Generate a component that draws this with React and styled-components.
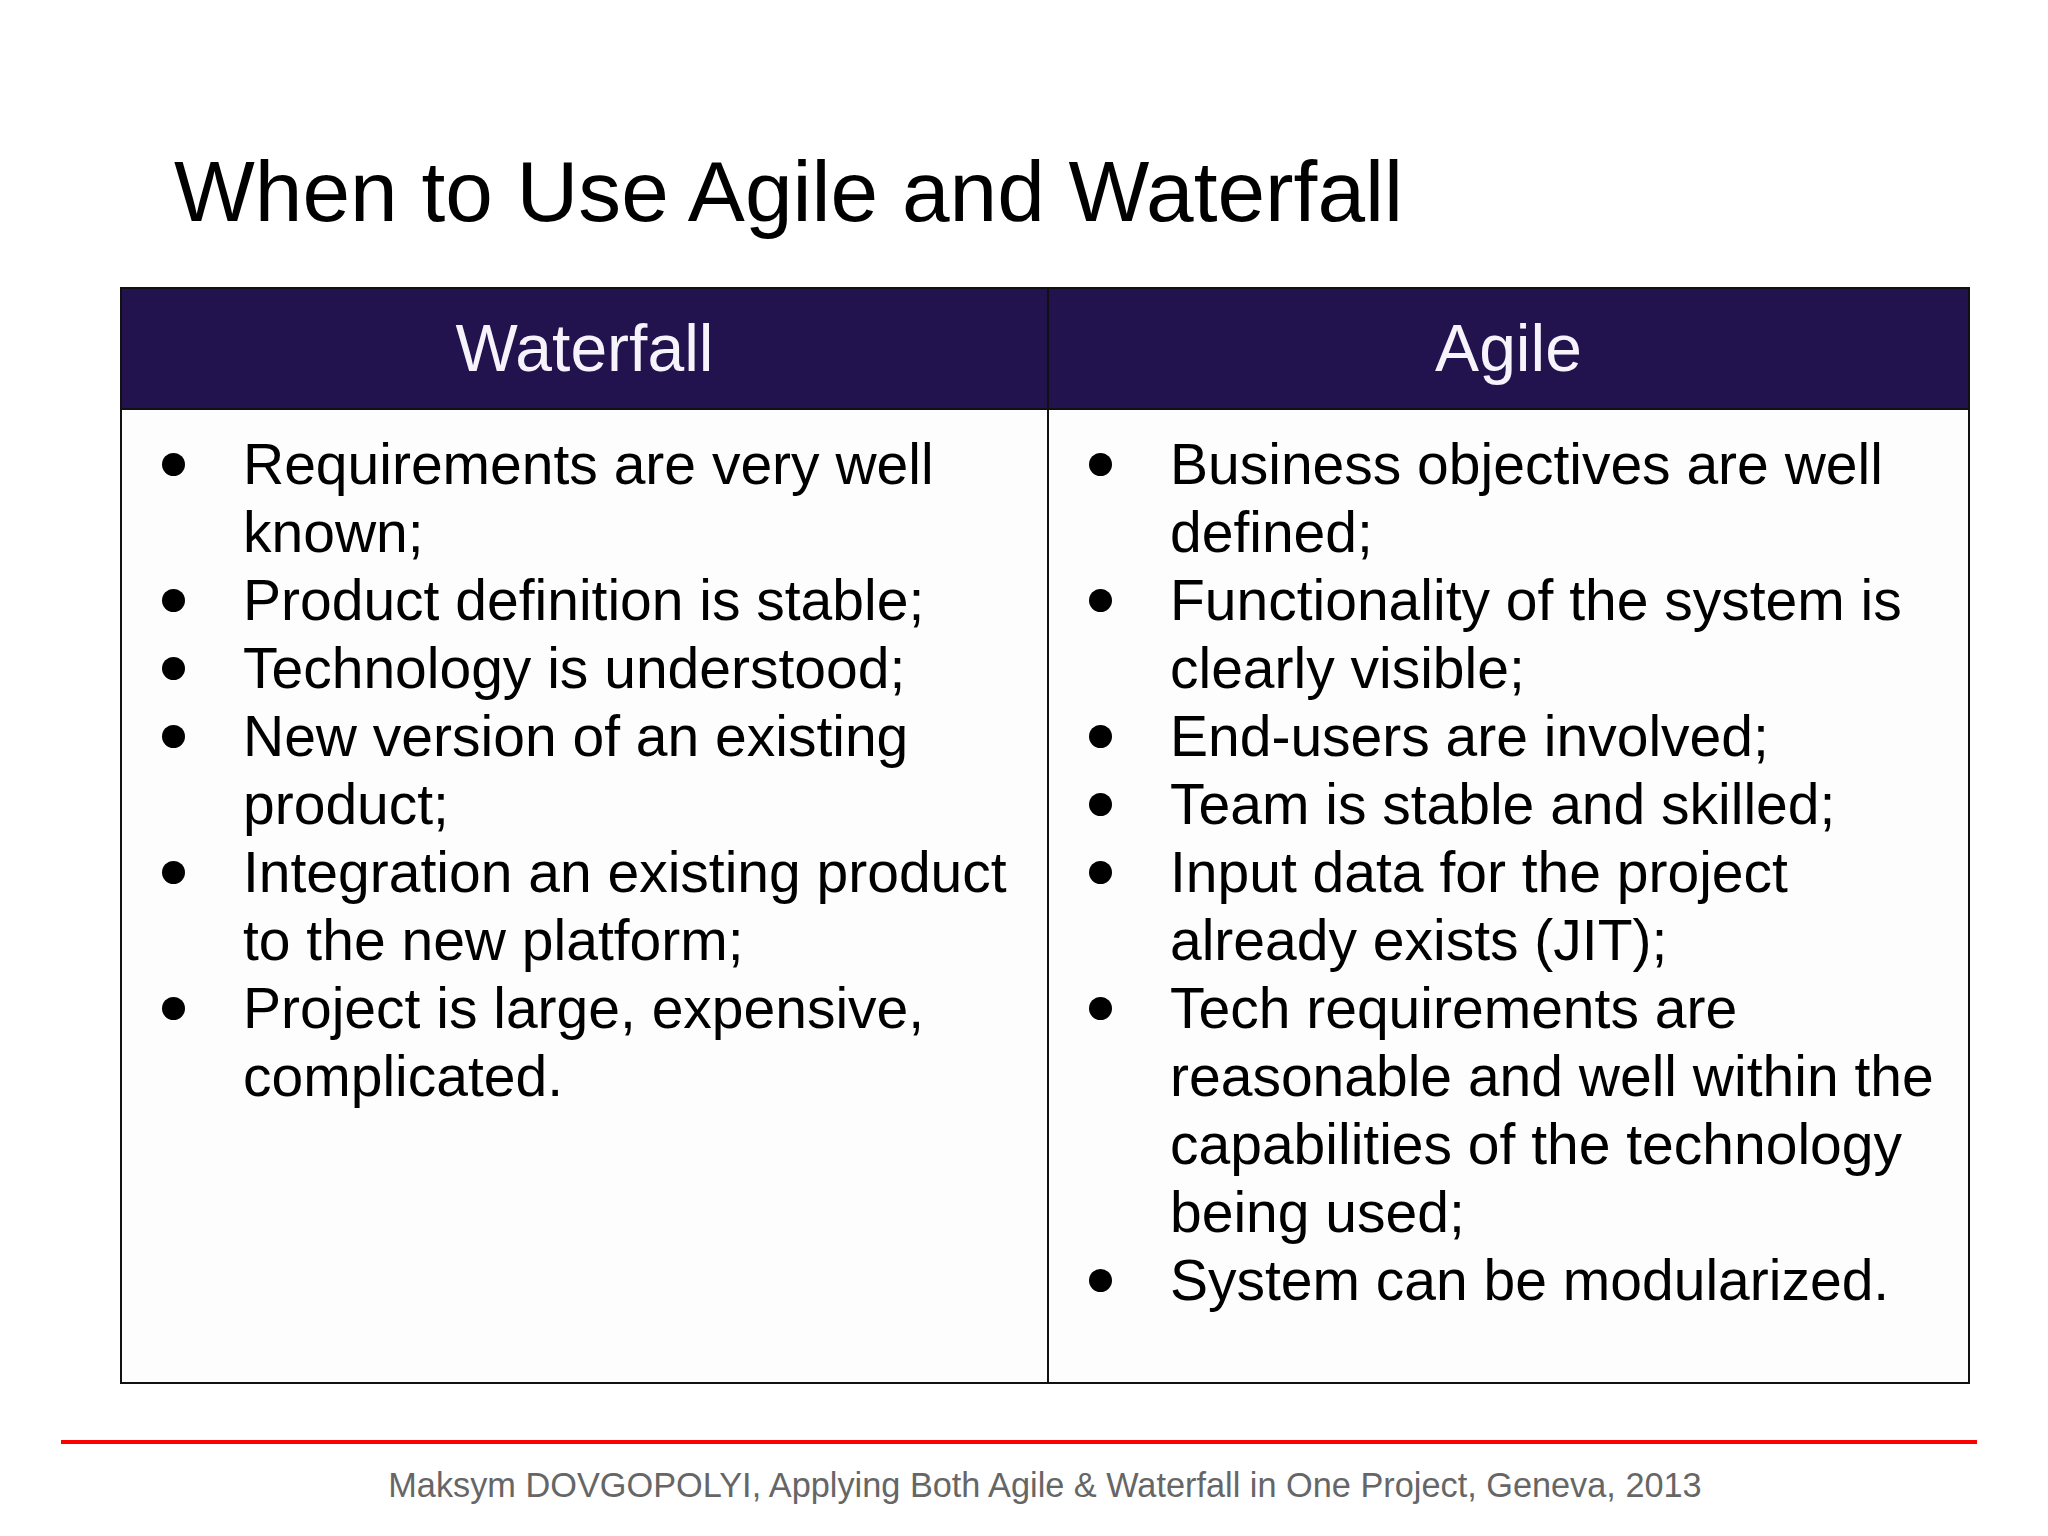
import React from 'react';
import styled, { createGlobalStyle } from 'styled-components';

const GlobalStyle = createGlobalStyle`
  html, body {
    margin: 0;
    padding: 0;
    background: #ffffff;
  }
  body {
    font-family: "Liberation Sans", Arial, sans-serif;
  }
`;

const waterfall = [
  'Requirements are very well known;',
  'Product definition is stable;',
  'Technology is understood;',
  'New version of an existing product;',
  'Integration an existing product to the new platform;',
  'Project is large, expensive, complicated.',
];

const agile = [
  'Business objectives are well defined;',
  'Functionality of the system is clearly visible;',
  'End-users are involved;',
  'Team is stable and skilled;',
  'Input data for the project already exists (JIT);',
  'Tech requirements are reasonable and well within the capabilities of the technology being used;',
  'System can be modularized.',
];

const App = () => {
  return (
    <>
      <GlobalStyle />
      <Slide>
        <Title>When to Use Agile and Waterfall</Title>
        <Table>
          <HeaderCell $divider>Waterfall</HeaderCell>
          <HeaderCell>Agile</HeaderCell>
          <BodyCell $divider>
            {waterfall.map((text) => (
              <Item key={text}>
                <BulletBox><Dot /></BulletBox>
                <span>{text}</span>
              </Item>
            ))}
          </BodyCell>
          <BodyCell>
            {agile.map((text) => (
              <Item key={text}>
                <BulletBox><Dot /></BulletBox>
                <span>{text}</span>
              </Item>
            ))}
          </BodyCell>
        </Table>
        <RedRule />
        <Footer>Maksym DOVGOPOLYI, Applying Both Agile &amp; Waterfall in One Project, Geneva, 2013</Footer>
      </Slide>
    </>
  );
};

const Slide = styled.div`
  width: 2048px;
  height: 1536px;
  box-sizing: border-box;
  padding-top: 142px;
  display: flex;
  flex-direction: column;
  background: #ffffff;
  overflow: hidden;
`;

const Title = styled.h1`
  margin: 0 0 45px 174px;
  font-family: "Liberation Sans", Arial, sans-serif;
  font-weight: 400;
  font-size: 85.6px;
  line-height: 100px;
  color: #000;
  white-space: nowrap;
`;

const Table = styled.div`
  margin-left: 120px;
  width: 1850px;
  height: 1097px;
  box-sizing: border-box;
  border: 2px solid #111;
  display: grid;
  grid-template-columns: 927px 1fr;
  grid-template-rows: 121px 1fr;
  background: #fdfdfd;
`;

const HeaderCell = styled.div`
  background: #22134f;
  color: #f7f3fb;
  border-bottom: 2px solid #111;
  border-right: ${(p) => (p.$divider ? '2px solid #111' : 'none')};
  display: flex;
  align-items: center;
  justify-content: center;
  font-size: 66px;
  line-height: 1;
  padding-bottom: 2px;
`;

const BodyCell = styled.div`
  border-right: ${(p) => (p.$divider ? '2px solid #111' : 'none')};
  padding: 20px 20px 0 40px;
  display: flex;
  flex-direction: column;
`;

const Item = styled.div`
  display: grid;
  grid-template-columns: 81px 1fr;
  font-size: 57px;
  line-height: 68px;
  color: #000;
`;

const BulletBox = styled.div`
  height: 68px;
  display: flex;
  align-items: center;
`;

const Dot = styled.span`
  width: 23px;
  height: 23px;
  border-radius: 50%;
  background: #000;
`;

const RedRule = styled.div`
  margin: 56px 0 0 61px;
  width: 1916px;
  height: 4px;
  background: #ff0000;
`;

const Footer = styled.div`
  margin-top: 21px;
  text-align: center;
  padding-left: 42px;
  font-size: 34.3px;
  line-height: 40px;
  color: #666666;
  white-space: nowrap;
`;

export default App;
